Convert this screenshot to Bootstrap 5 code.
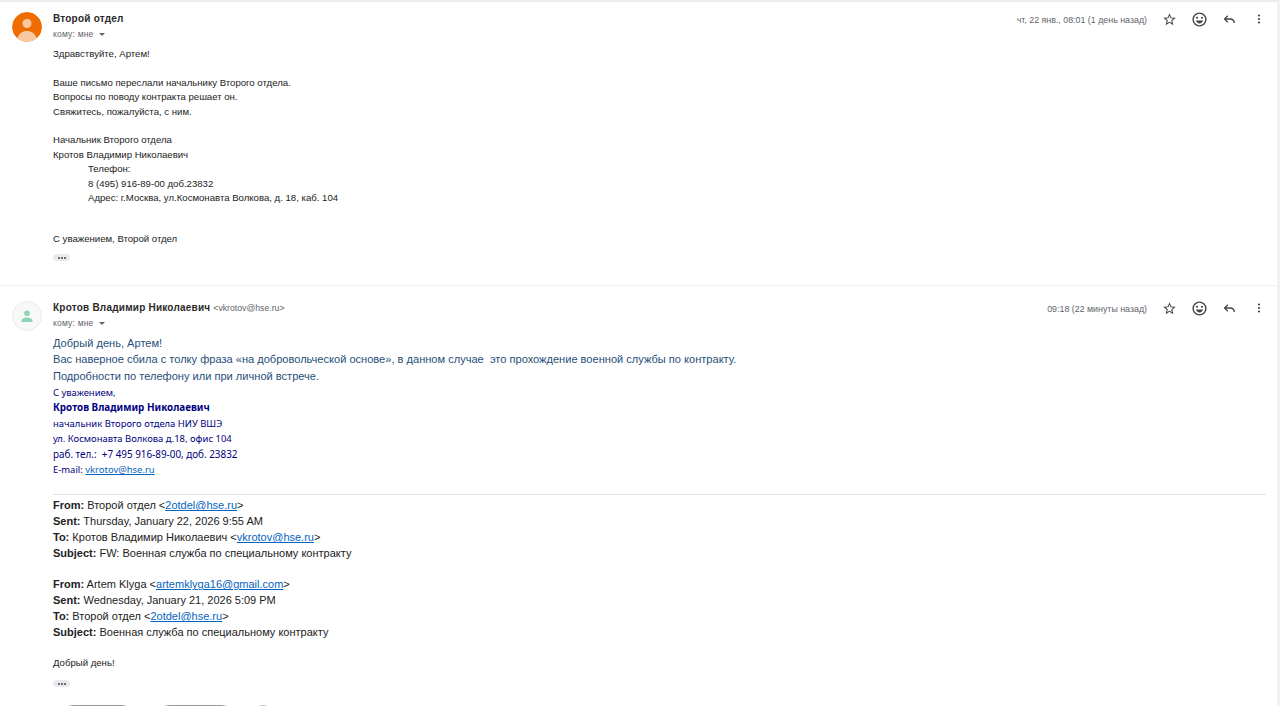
<!DOCTYPE html>
<html lang="ru">
<head>
  <meta charset="UTF-8" />
  <title>Почта</title>
  <link href="https://cdn.jsdelivr.net/npm/bootstrap@5.3.2/dist/css/bootstrap.min.css" rel="stylesheet">
  <style>
    html, body { height: 706px; overflow: hidden; }
    body { background: #fff; font-family: "Liberation Sans", Arial, sans-serif; color: #222; }
    .mail-page { height: 706px; overflow: hidden; border-top: 2px solid #eceded; border-right: 3px solid #f1f1f1; }
    .msg-one { height: 284px; padding: 10px 3px 0 12px; border-bottom: 1px solid #f0f0f0; }
    .msg-two { padding: 15px 3px 0 12px; }
    .ava { width: 30px; height: 30px; border-radius: 50%; flex: none; margin-right: 11px; }
    .ava-grey { border: 1px solid #e8eaed; background: #f7f8f8; }
    .msg-head { height: 30px; }
    .who { font-size: 10px; font-weight: 700; line-height: 14px; letter-spacing: .22px; color: #2a2a2a; }
    .who-mail { font-size: 8.7px; font-weight: 400; color: #5f6368; letter-spacing: 0; }
    .to-me { font-size: 8.5px; line-height: 14px; color: #5f6368; margin-top: 1px; letter-spacing: .2px; }
    .caret-down { display: inline-block; margin-left: 5px; vertical-align: 1px; border-left: 3px solid transparent; border-right: 3px solid transparent; border-top: 3px solid #5f6368; }
    .stamp { font-size: 8.85px; line-height: 14px; color: #5f6368; margin-right: 7px; margin-top: 1px; }
    .tool { width: 30px; height: 14px; display: flex; justify-content: center; align-items: center; }
    .body-a { margin: 5px 0 0 41px; font-size: 9.6px; line-height: 14.4px; color: #222; }
    .indent-a { padding-left: 35px; }
    .gap-a { height: 14.4px; }
    .gap-b { height: 13.3px; }
    .more-pill { display: flex; width: 17px; height: 7px; margin-top: 8px; background: #e8eaed; border-radius: 4px; justify-content: center; align-items: center; gap: 1px; }
    .more-pill i { display: block; width: 2px; height: 2px; border-radius: 50%; background: #444; }
    .pill-two { margin: 10px 0 0 41px; }
    .blue-text { margin: 4px 0 0 41px; font-size: 11.07px; line-height: 16.3px; color: #1f4e79; }
    .sign { margin: 1px 0 0 41px; font-family: "Noto Sans", sans-serif; font-size: 9.45px; line-height: 15.4px; color: #000080; }
    .sign b, .sign-tel { font-size: 9.9px; }
    .sign a, .quote a { color: #0563c1; text-decoration: underline; }
    .quote { margin: 17px 8px 0 41px; padding-top: 2px; border-top: 1px solid #e1e1e1; font-size: 11px; line-height: 16px; color: #222; }
    .quote-gap { height: 15px; }
    .quote-end { margin: 16px 0 0 41px; font-size: 9.6px; line-height: 14px; color: #222; }
    .foot-pills { margin: 18px 0 0 51px; }
    .foot-pill { height: 20px; border: 1px solid #9a9a9a; border-radius: 10px; flex: none; }
    .foot-w1 { width: 69px; margin-right: 27px; }
    .foot-w2 { width: 73px; margin-right: 21px; }
    .foot-w3 { width: 20px; border-color: #bbb; }
  </style>
</head>
<body>
  <div class="mail-page">

    <!-- письмо 1 -->
    <div class="msg-one">
      <div class="d-flex msg-head">
        <svg class="ava" viewBox="0 0 30 30">
          <circle cx="15" cy="15" r="15" fill="#ef6c00"/>
          <circle cx="15" cy="11.5" r="4.5" fill="#f8c9a0"/>
          <path d="M5.5 26.5c1-5 5-7.5 9.500-7.500s8.500 2.500 9.500 7.500a15 15 0 0 1-19 0z" fill="#f8c9a0"/>
        </svg>
        <div class="flex-grow-1">
          <div class="who">Второй отдел</div>
          <div class="to-me">кому: мне<span class="caret-down"></span></div>
        </div>
        <div class="stamp">чт, 22 янв., 08:01 (1 день назад)</div>
        <div class="tool"><svg width="15" height="15" viewBox="0 0 24 24" fill="#444"><path d="M22 9.240l-7.190-.620L12 2 9.190 8.630 2 9.240l5.460 4.730L5.820 21 12 17.270 18.180 21l-1.630-7.030L22 9.240zM12 15.400l-3.760 2.270 1-4.280-3.320-2.880 4.380-.38L12 6.100l1.710 4.040 4.380.38-3.320 2.880 1 4.280L12 15.400z"/></svg></div>
        <div class="tool"><svg width="17" height="17" viewBox="0 0 24 24" fill="#444"><path d="M12 2a10 10 0 1 0 0 20 10 10 0 0 0 0-20zm0 18a8 8 0 1 1 0-16 8 8 0 0 1 0 16z"/><circle cx="8.500" cy="9.500" r="1.500"/><circle cx="15.500" cy="9.500" r="1.500"/><path d="M7 13.500h10c-.6 2.500-2.600 4-5 4s-4.400-1.500-5-4z"/></svg></div>
        <div class="tool"><svg width="16" height="16" viewBox="0 0 24 24" fill="#444"><path d="M9.500 6.500 4 12l5.500 5.500 1.400-1.400L7.800 13H14c2.800 0 4.500 1.600 5 5h2c-.5-4.700-3-7-7-7H7.800l3.100-3.100z"/></svg></div>
        <div class="tool"><svg width="12" height="12" viewBox="0 0 24 24" fill="#444"><circle cx="12" cy="5" r="2.200"/><circle cx="12" cy="12" r="2.200"/><circle cx="12" cy="19" r="2.200"/></svg></div>
      </div>
      <div class="body-a">
        <div>Здравствуйте, Артем!</div>
        <div class="gap-a"></div>
        <div>Ваше письмо переслали начальнику Второго отдела.</div>
        <div>Вопросы по поводу контракта решает он.</div>
        <div>Свяжитесь, пожалуйста, с ним.</div>
        <div class="gap-a"></div>
        <div>Начальник Второго отдела</div>
        <div>Кротов Владимир Николаевич</div>
        <div class="indent-a">Телефон:</div>
        <div class="indent-a">8 (495) 916-89-00 доб.23832</div>
        <div class="indent-a">Адрес: г.Москва, ул.Космонавта Волкова, д. 18, каб. 104</div>
        <div class="gap-b"></div>
        <div class="gap-b"></div>
        <div>С уважением, Второй отдел</div>
        <div class="more-pill"><i></i><i></i><i></i></div>
      </div>
    </div>

    <!-- письмо 2 -->
    <div class="msg-two">
      <div class="d-flex msg-head">
        <svg class="ava ava-grey" viewBox="0 0 30 30">
          <circle cx="15" cy="12" r="3" fill="#8fd3b6"/>
          <path d="M9 20.500c0-2.500 3-4 6-4s6 1.500 6 4v1H9z" fill="#8fd3b6"/>
        </svg>
        <div class="flex-grow-1">
          <div class="who">Кротов Владимир Николаевич <span class="who-mail">&lt;vkrotov@hse.ru&gt;</span></div>
          <div class="to-me">кому: мне<span class="caret-down"></span></div>
        </div>
        <div class="stamp">09:18 (22 минуты назад)</div>
        <div class="tool"><svg width="15" height="15" viewBox="0 0 24 24" fill="#444"><path d="M22 9.240l-7.190-.620L12 2 9.190 8.630 2 9.240l5.460 4.730L5.820 21 12 17.270 18.180 21l-1.630-7.030L22 9.240zM12 15.400l-3.760 2.270 1-4.280-3.320-2.880 4.380-.38L12 6.100l1.710 4.040 4.380.38-3.320 2.880 1 4.280L12 15.400z"/></svg></div>
        <div class="tool"><svg width="17" height="17" viewBox="0 0 24 24" fill="#444"><path d="M12 2a10 10 0 1 0 0 20 10 10 0 0 0 0-20zm0 18a8 8 0 1 1 0-16 8 8 0 0 1 0 16z"/><circle cx="8.500" cy="9.500" r="1.500"/><circle cx="15.500" cy="9.500" r="1.500"/><path d="M7 13.500h10c-.6 2.500-2.600 4-5 4s-4.400-1.500-5-4z"/></svg></div>
        <div class="tool"><svg width="16" height="16" viewBox="0 0 24 24" fill="#444"><path d="M9.500 6.500 4 12l5.500 5.500 1.400-1.400L7.800 13H14c2.800 0 4.500 1.600 5 5h2c-.5-4.700-3-7-7-7H7.800l3.100-3.100z"/></svg></div>
        <div class="tool"><svg width="12" height="12" viewBox="0 0 24 24" fill="#444"><circle cx="12" cy="5" r="2.200"/><circle cx="12" cy="12" r="2.200"/><circle cx="12" cy="19" r="2.200"/></svg></div>
      </div>
      <div class="blue-text">
        <div>Добрый день, Артем!</div>
        <div>Вас наверное сбила с толку фраза «на добровольческой основе», в данном случае &nbsp;это прохождение военной службы по контракту.</div>
        <div>Подробности по телефону или при личной встрече.</div>
      </div>
      <div class="sign">
        <div>С уважением,</div>
        <div><b>Кротов Владимир Николаевич</b></div>
        <div>начальник Второго отдела НИУ ВШЭ</div>
        <div>ул. Космонавта Волкова д.18, офис 104</div>
        <div class="sign-tel">раб. тел.: &nbsp;+7 495 916-89-00, доб. 23832</div>
        <div>E-mail: <a href="#">vkrotov@hse.ru</a></div>
      </div>
      <div class="quote">
        <div><b>From:</b> Второй отдел &lt;<a href="#">2otdel@hse.ru</a>&gt;</div>
        <div><b>Sent:</b> Thursday, January 22, 2026 9:55 AM</div>
        <div><b>To:</b> Кротов Владимир Николаевич &lt;<a href="#">vkrotov@hse.ru</a>&gt;</div>
        <div><b>Subject:</b> FW: Военная служба по специальному контракту</div>
        <div class="quote-gap"></div>
        <div><b>From:</b> Artem Klyga &lt;<a href="#">artemklyga16@gmail.com</a>&gt;</div>
        <div><b>Sent:</b> Wednesday, January 21, 2026 5:09 PM</div>
        <div><b>To:</b> Второй отдел &lt;<a href="#">2otdel@hse.ru</a>&gt;</div>
        <div><b>Subject:</b> Военная служба по специальному контракту</div>
      </div>
      <div class="quote-end">Добрый день!</div>
      <div class="more-pill pill-two"><i></i><i></i><i></i></div>
      <div class="d-flex foot-pills">
        <div class="foot-pill foot-w1"></div>
        <div class="foot-pill foot-w2"></div>
        <div class="foot-pill foot-w3"></div>
      </div>
    </div>
  </div>
  <script src="https://cdn.jsdelivr.net/npm/bootstrap@5.3.2/dist/js/bootstrap.bundle.min.js"></script>
</body>
</html>
